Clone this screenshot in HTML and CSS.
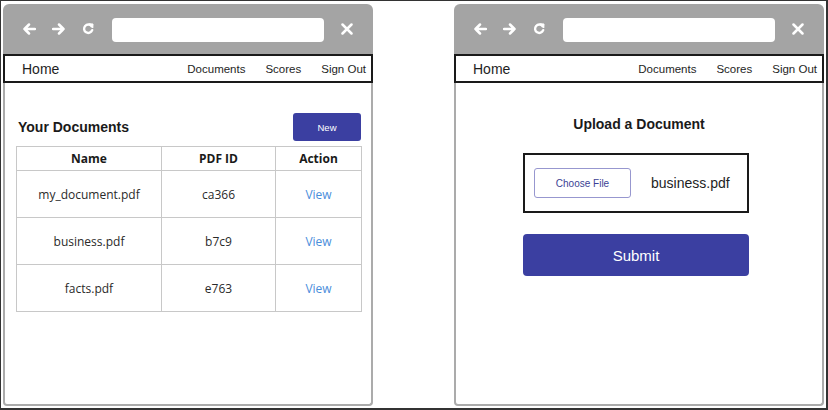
FILE: index.html
```html
<!DOCTYPE html>
<html>
<head>
<meta charset="utf-8">
<link rel="stylesheet" href="styles.css">
</head>
<body>
<div class="frame">
  <div class="window">
    <div class="chrome">
      <svg class="ic ic-back" width="14" height="12" viewBox="0 0 14 12"><path d="M13 6H2.5M7 1.5L2.5 6L7 10.5" fill="none" stroke="#fff" stroke-width="2.5" stroke-linecap="round" stroke-linejoin="round"/></svg>
      <svg class="ic ic-fwd" width="14" height="12" viewBox="0 0 14 12"><path d="M1 6H11.5M7 1.5L11.5 6L7 10.5" fill="none" stroke="#fff" stroke-width="2.5" stroke-linecap="round" stroke-linejoin="round"/></svg>
      <svg class="ic ic-ref" width="12" height="12" viewBox="0 0 12 12"><path d="M9.6 3.2A4.2 4.2 0 1 0 10.2 7.2" fill="none" stroke="#fff" stroke-width="2.4" stroke-linecap="round"/><path d="M7 0.8L11 1L10.8 5Z" fill="#fff" stroke="#fff" stroke-width="1" stroke-linejoin="round"/></svg>
      <div class="url"></div>
      <svg class="ic ic-x" width="12" height="12" viewBox="0 0 12 12"><path d="M1.5 1.5L10.5 10.5M10.5 1.5L1.5 10.5" fill="none" stroke="#fff" stroke-width="2.5" stroke-linecap="round"/></svg>
    </div>
    <div class="nav">
      <span class="home">Home</span>
      <div class="links"><span>Documents</span><span>Scores</span><span>Sign Out</span></div>
    </div>
    <div class="page page-docs">
      <div class="doc-head">
        <h2 class="title">Your Documents</h2>
        <button class="btn-new">New</button>
      </div>
      <table class="docs">
        <colgroup><col class="c1"><col class="c2"><col class="c3"></colgroup>
        <tr class="hrow"><th>Name</th><th>PDF ID</th><th>Action</th></tr>
        <tr><td>my_document.pdf</td><td>ca366</td><td class="link">View</td></tr>
        <tr><td>business.pdf</td><td>b7c9</td><td class="link">View</td></tr>
        <tr><td>facts.pdf</td><td>e763</td><td class="link">View</td></tr>
      </table>
    </div>
  </div>
  <div class="window">
    <div class="chrome">
      <svg class="ic ic-back" width="14" height="12" viewBox="0 0 14 12"><path d="M13 6H2.5M7 1.5L2.5 6L7 10.5" fill="none" stroke="#fff" stroke-width="2.5" stroke-linecap="round" stroke-linejoin="round"/></svg>
      <svg class="ic ic-fwd" width="14" height="12" viewBox="0 0 14 12"><path d="M1 6H11.5M7 1.5L11.5 6L7 10.5" fill="none" stroke="#fff" stroke-width="2.5" stroke-linecap="round" stroke-linejoin="round"/></svg>
      <svg class="ic ic-ref" width="12" height="12" viewBox="0 0 12 12"><path d="M9.6 3.2A4.2 4.2 0 1 0 10.2 7.2" fill="none" stroke="#fff" stroke-width="2.4" stroke-linecap="round"/><path d="M7 0.8L11 1L10.8 5Z" fill="#fff" stroke="#fff" stroke-width="1" stroke-linejoin="round"/></svg>
      <div class="url"></div>
      <svg class="ic ic-x" width="12" height="12" viewBox="0 0 12 12"><path d="M1.5 1.5L10.5 10.5M10.5 1.5L1.5 10.5" fill="none" stroke="#fff" stroke-width="2.5" stroke-linecap="round"/></svg>
    </div>
    <div class="nav">
      <span class="home">Home</span>
      <div class="links"><span>Documents</span><span>Scores</span><span>Sign Out</span></div>
    </div>
    <div class="page page-upload">
      <h2 class="title">Upload a Document</h2>
      <div class="filebox">
        <button class="btn-choose">Choose File</button>
        <span class="fname">business.pdf</span>
      </div>
      <button class="btn-submit">Submit</button>
    </div>
  </div>
</div>
</body>
</html>
```
FILE: styles.css
```css
html, body {
  margin: 0;
  padding: 0;
  background: #fff;
}
.frame {
  box-sizing: border-box;
  width: 828px;
  height: 410px;
  border: 1px solid #333;
  border-right-width: 2px;
  border-bottom-width: 2px;
  padding: 3px 2px 2px 2px;
  display: flex;
  gap: 81px;
  font-family: "Liberation Sans", Arial, sans-serif;
}
.window {
  width: 370px;
  height: 402px;
  display: flex;
  flex-direction: column;
}
.chrome {
  height: 50px;
  flex: none;
  background: #a4a4a4;
  border-radius: 6px 6px 0 0;
  display: flex;
  align-items: center;
  padding-left: 19px;
  box-sizing: border-box;
}
.ic { display: block; flex: none; }
.ic-back { margin-top: -1px; }
.ic-fwd { margin-left: 16px; margin-top: -1px; }
.ic-ref { margin-left: 16px; margin-top: 0; }
.url {
  width: 212px;
  height: 24px;
  background: #fff;
  border-radius: 4px;
  margin-left: 18px;
  margin-top: 1px;
}
.ic-x { margin-left: 17px; }
.nav {
  height: 29px;
  flex: none;
  box-sizing: border-box;
  border: 2px solid #1a1a1a;
  display: flex;
  align-items: center;
  justify-content: space-between;
  padding: 0 5px 0 17px;
  color: #1e1e1e;
}
.home { font-size: 14px; }
.links {
  display: flex;
  gap: 20px;
  font-size: 11.5px;
}
.page {
  flex: 1;
  border: 2px solid #ababab;
  border-top: 0;
  border-radius: 0 0 4px 4px;
  background: #fff;
}
.title {
  margin: 0;
  font-family: "Liberation Sans", Arial, sans-serif;
  font-size: 14px;
  line-height: 16px;
  font-weight: bold;
  color: #1a1a1a;
}
.page-docs {
  padding: 30px 10px 0 12px;
}
.doc-head {
  display: flex;
  justify-content: space-between;
  align-items: center;
  height: 28px;
  padding-left: 1px;
}
.btn-new {
  width: 68px;
  height: 28px;
  border: 0;
  border-radius: 3px;
  background: #3b3fa1;
  color: #fff;
  font-family: "Liberation Sans", Arial, sans-serif;
  font-size: 9.5px;
  padding: 0;
}
.docs {
  margin-top: 5px;
  margin-left: -1px;
  width: 345px;
  border-collapse: collapse;
  table-layout: fixed;
  font-family: "Open Sans", sans-serif;
  font-size: 12px;
  color: #2a2a2a;
}
.c1 { width: 145px; }
.c2 { width: 114px; }
.c3 { width: 86px; }
.docs th, .docs td {
  border: 1px solid #c8c8c8;
  text-align: center;
  padding: 0;
}
.docs th {
  height: 23px;
  font-weight: bold;
  color: #1a1a1a;
}
.docs td { height: 46px; }
.docs td.link { color: #4a8edb; }
.page-upload {
  display: flex;
  flex-direction: column;
  align-items: center;
  padding-top: 33px;
}
.filebox {
  margin-top: 21px;
  margin-right: 6px;
  width: 226px;
  height: 60px;
  box-sizing: border-box;
  border: 2px solid #1a1a1a;
  display: flex;
  align-items: center;
  padding-left: 9px;
}
.btn-choose {
  width: 97px;
  height: 30px;
  box-sizing: border-box;
  border: 1px solid #9797cf;
  border-radius: 3px;
  background: #fff;
  color: #3b3f94;
  font-family: "Liberation Sans", Arial, sans-serif;
  font-size: 10px;
  padding: 0;
}
.fname {
  margin-left: 20px;
  font-size: 14px;
  color: #1e1e1e;
}
.btn-submit {
  margin-top: 21px;
  margin-right: 6px;
  width: 226px;
  height: 42px;
  border: 0;
  border-radius: 4px;
  background: #3b3fa1;
  color: #fff;
  font-family: "Liberation Sans", Arial, sans-serif;
  font-size: 15px;
  padding: 0;
}
```
